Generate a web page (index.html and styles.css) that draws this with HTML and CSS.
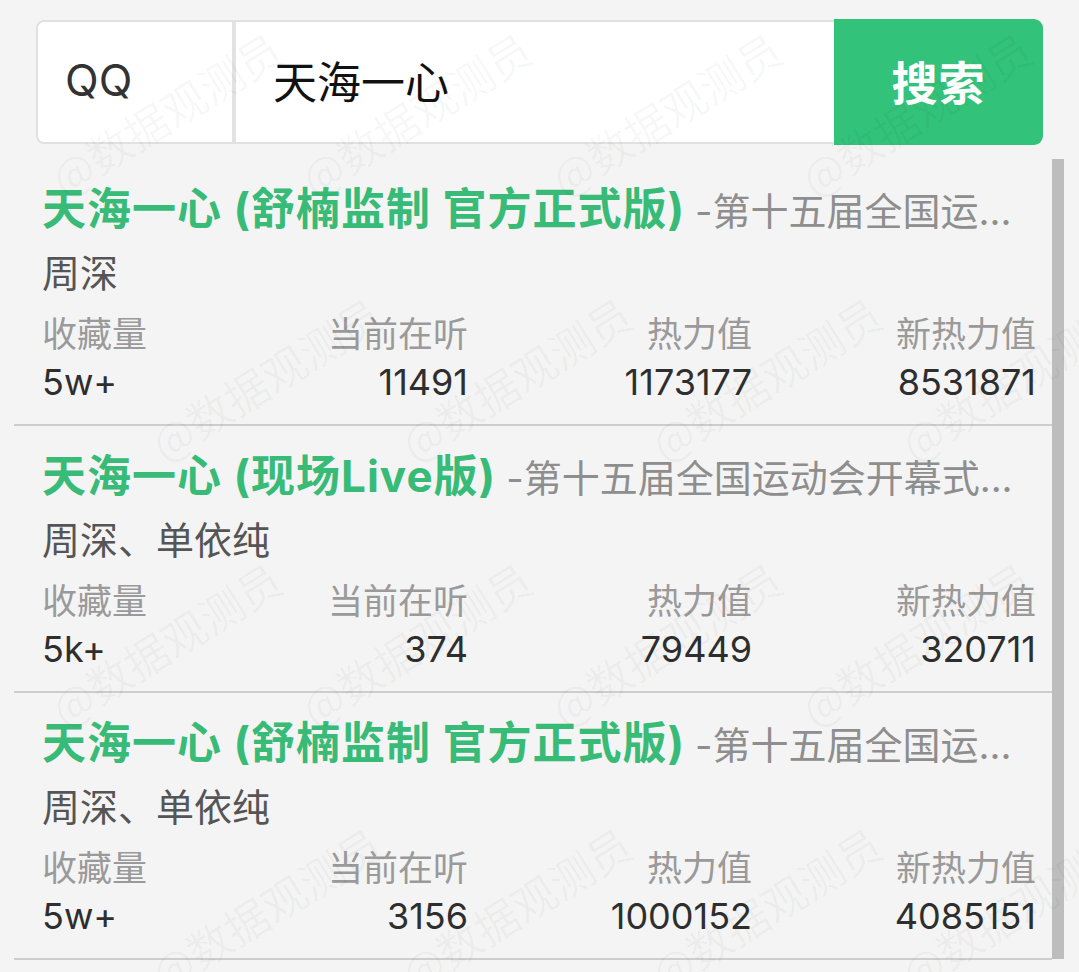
FILE: index.html
```html
<!DOCTYPE html>
<html lang="zh-CN">
<head>
<meta charset="utf-8">
<title>搜索</title>
<link rel="stylesheet" href="styles.css">
</head>
<body>
<div class="page">
  <div class="search">
    <div class="search-box">
      <div class="source">QQ</div>
      <div class="query">天海一心</div>
    </div>
    <div class="btn">搜索</div>
  </div>

  <div class="results">
    <div class="list">
      <div class="item">
        <div class="title"><span class="name">天海一心 (舒楠监制 官方正式版)</span><span class="sub">-第十五届全国运...</span></div>
        <div class="artist">周深</div>
        <div class="stats">
          <span class="label">收藏量</span><span class="label">当前在听</span><span class="label">热力值</span><span class="label">新热力值</span>
          <span class="value">5w+</span><span class="value">11491</span><span class="value">1173177</span><span class="value">8531871</span>
        </div>
      </div>
      <div class="item">
        <div class="title"><span class="name">天海一心 (现场Live版)</span><span class="sub">-第十五届全国运动会开幕式...</span></div>
        <div class="artist">周深、单依纯</div>
        <div class="stats">
          <span class="label">收藏量</span><span class="label">当前在听</span><span class="label">热力值</span><span class="label">新热力值</span>
          <span class="value">5k+</span><span class="value">374</span><span class="value">79449</span><span class="value">320711</span>
        </div>
      </div>
      <div class="item">
        <div class="title"><span class="name">天海一心 (舒楠监制 官方正式版)</span><span class="sub">-第十五届全国运...</span></div>
        <div class="artist">周深、单依纯</div>
        <div class="stats">
          <span class="label">收藏量</span><span class="label">当前在听</span><span class="label">热力值</span><span class="label">新热力值</span>
          <span class="value">5w+</span><span class="value">3156</span><span class="value">1000152</span><span class="value">4085151</span>
        </div>
      </div>
    </div>
    <div class="scrollbar"></div>
  </div>

  <div class="watermark" aria-hidden="true">
    <span>@数据观测员</span><span>@数据观测员</span><span>@数据观测员</span><span>@数据观测员</span>
    <span>@数据观测员</span><span>@数据观测员</span><span>@数据观测员</span><span>@数据观测员</span>
    <span>@数据观测员</span><span>@数据观测员</span><span>@数据观测员</span><span>@数据观测员</span>
    <span>@数据观测员</span><span>@数据观测员</span><span>@数据观测员</span><span>@数据观测员</span>
  </div>
</div>
</body>
</html>
```

FILE: styles.css
```css
html, body {
  margin: 0;
  padding: 0;
}

body {
  background: #f4f4f4;
  font-family: Inter, "Noto Sans CJK SC", sans-serif;
  color: #333;
  width: 1079px;
  height: 972px;
  overflow: hidden;
}

.page {
  position: relative;
  padding-top: 19px;
  height: 953px;
  overflow: hidden;
}

/* search bar */
.search {
  display: flex;
  height: 126px;
  margin: 0 36px;
}

.search-box {
  flex: 1;
  display: flex;
  margin: 1px 0;
  background: #fff;
  border: 2px solid #e1e1e1;
  border-right: none;
  border-radius: 8px 0 0 8px;
}

.source {
  width: 167px;
  padding: 0 0 4px 27px;
  display: flex;
  align-items: center;
  font-size: 44px;
  color: #333;
  border-right: 4px solid #e2e2e2;
}

.query {
  flex: 1;
  padding: 0 0 4px 37px;
  display: flex;
  align-items: center;
  font-family: "Noto Sans CJK SC", sans-serif;
  font-size: 44px;
  color: #111;
}

.btn {
  width: 209px;
  padding-bottom: 4px;
  box-sizing: border-box;
  display: flex;
  align-items: center;
  justify-content: center;
  background: #33c27a;
  color: #fff;
  font-family: "Noto Sans CJK SC", sans-serif;
  font-weight: 700;
  font-size: 46px;
  letter-spacing: 1px;
  border-radius: 0 9px 9px 0;
}

/* results */
.results {
  display: flex;
  margin: 14px 0 0 14px;
  height: 800px;
}

.list {
  width: 1038px;
}

.scrollbar {
  width: 12px;
  background: #bdbdbd;
}

.item {
  padding: 18px 16px 17px 28px;
  border-bottom: 2px solid #cdcdcd;
}

.title {
  height: 64px;
  line-height: 64px;
  white-space: nowrap;
  overflow: hidden;
}

.name {
  font-size: 44px;
  font-weight: 700;
  letter-spacing: 1px;
  color: #38bb77;
}

.sub {
  margin-left: 10px;
  font-size: 38px;
  color: #8e8e8e;
}

.artist {
  height: 64px;
  line-height: 64px;
  font-size: 38px;
  color: #555;
}

.stats {
  display: grid;
  grid-template-columns: 1fr 2fr 2fr 2fr;
  grid-template-rows: 52px 50px;
  align-items: center;
}

.label {
  font-size: 35px;
  color: #9a9a9a;
  text-align: right;
}

.value {
  font-size: 36px;
  color: #2e2e2e;
  text-align: right;
}

.stats > :nth-child(4n+1) {
  text-align: left;
}

/* watermark overlay */
.watermark {
  position: absolute;
  top: -20px;
  left: 0;
  width: 1079px;
  display: grid;
  grid-template-columns: repeat(4, 250px);
  grid-auto-rows: 265px;
  padding-left: 40px;
  pointer-events: none;
}

.watermark span {
  display: flex;
  align-items: center;
  justify-content: center;
  font-family: "Noto Sans CJK SC", sans-serif;
  font-size: 44px;
  color: rgba(0, 0, 0, 0.035);
  transform: rotate(-32deg);
  white-space: nowrap;
}

.watermark span:nth-child(8n+5),
.watermark span:nth-child(8n+6),
.watermark span:nth-child(8n+7),
.watermark span:nth-child(8n+8) {
  transform: translateX(100px) rotate(-32deg);
}
```
